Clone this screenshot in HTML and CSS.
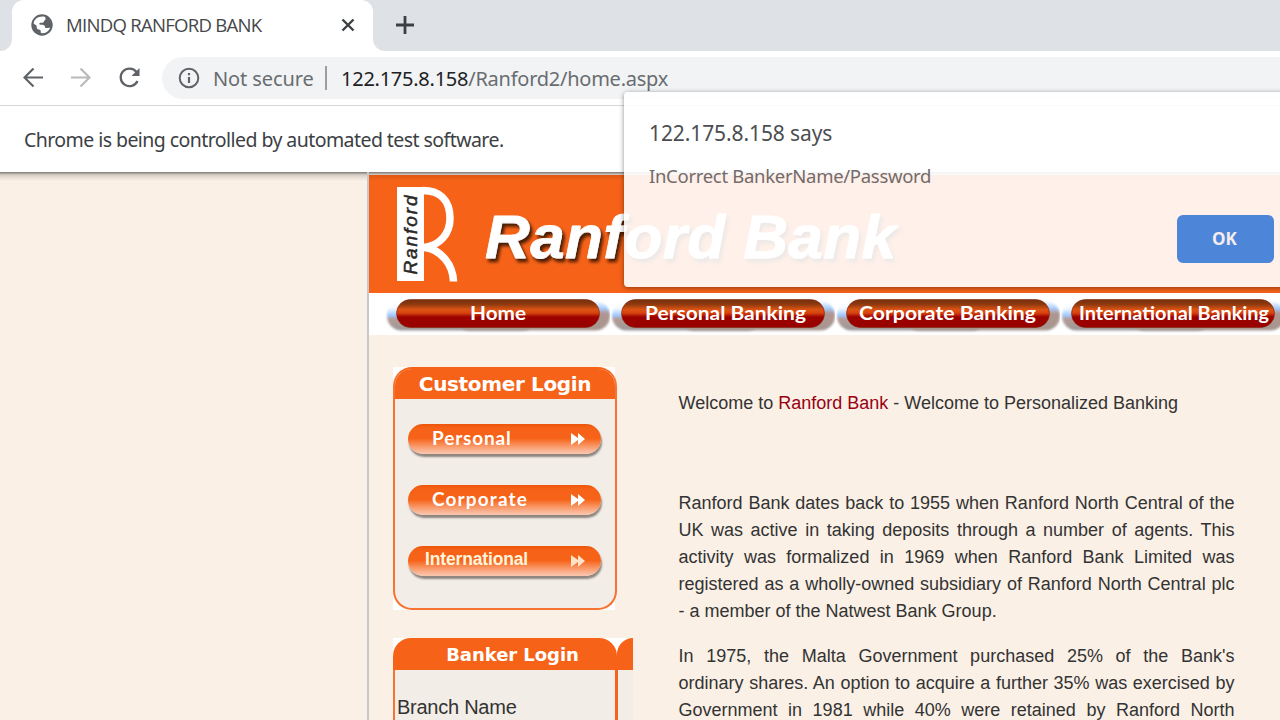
FILE: index.html
```html
<!DOCTYPE html>
<html lang="en">
<head>
<meta charset="utf-8">
<title>MINDQ RANFORD BANK</title>
<link rel="stylesheet" href="styles.css">
</head>
<body>
<div class="window">
  <header class="tabstrip">
    <div class="tab-prev"></div>
    <div class="tab">
      <svg class="globe" width="22" height="22" viewBox="0 0 22 22"><circle cx="11" cy="11" r="10.700" fill="#5f6368"/><path d="M12.500 2.500C14.200 2.800 14.800 3.800 14.600 5c-.2 1.200-1.500 1.300-1.700 2.500-.2 1-1 1.300-2.400 1.300-1.800 0-2.300.4-2.200 1.300.2.900 1.700.6 3.200.7 1.600.1 2.300.9 2.500 2.200.1.900.8 1 2 .9l3.200-.2c-1 3-3.800 5.300-7.200 5.600l-2.200-.2v-1.700c0-1.300-.9-1.900-2.100-2-1.300-.1-2-.9-2-2.200v-1.400L2.600 9.500C3 5.500 6.700 2 12.500 2.500z" fill="#fff"/></svg>
      <span class="tab-title">MINDQ RANFORD BANK</span>
      <svg class="tab-close" width="14" height="14" viewBox="0 0 14 14"><path d="M1.500 1.500l11 11M12.500 1.500l-11 11" stroke="#3c4043" stroke-width="2.400"/></svg>
    </div>
    <div class="tab-rest"><svg width="18" height="18" viewBox="0 0 18 18"><path d="M9 0v18M0 9h18" stroke="#3c4043" stroke-width="2.800"/></svg></div>
  </header>
  <div class="toolbar">
    <svg width="20" height="20" viewBox="0 0 20 20" fill="none" stroke="#5f6368" stroke-width="2.200"><path d="M20 9.500H2M10.500 .5L1.500 9.500l9 9"/></svg>
    <svg width="20" height="20" viewBox="0 0 20 20" fill="none" stroke="#bababa" stroke-width="2.200"><path d="M0 9.500h18M9.500 .5l9 9-9 9"/></svg>
    <svg width="22" height="22" viewBox="0 0 22 22"><path d="M17.500 5A8.800 8.800 0 1 0 18.500 14" fill="none" stroke="#5f6368" stroke-width="2.300"/><path d="M20.500 1v8h-8z" fill="#5f6368"/></svg>
    <div class="omnibox">
      <svg width="22" height="22" viewBox="0 0 22 22"><circle cx="11" cy="11" r="9.300" fill="none" stroke="#5f6368" stroke-width="2"/><path d="M11 10v6M11 6v2.200" stroke="#5f6368" stroke-width="2.200"/></svg>
      <span class="secure">Not secure</span><span class="divider"></span><span class="url"><b>122.175.8.158</b>/Ranford2/home.aspx</span>
    </div>
  </div>
  <div class="infobar"><span>Chrome is being controlled by automated test software.</span></div>
  <main class="viewport">
    <div class="page">
      <svg class="banner" width="911" height="118" viewBox="0 0 911 118">
        <defs><filter id="shade" x="-10%" y="-20%" width="120%" height="150%"><feDropShadow dx="2.500" dy="3.500" stdDeviation="1.800" flood-color="#2b1005" flood-opacity=".85"/></filter></defs>
        <path d="M28 12h27v94H28z" fill="#fff"/>
        <path d="M54 15.500c15 0 27 8 27 28 0 15-10 27-26 29 18 2 29 18 29.500 34" fill="none" stroke="#fff" stroke-width="7.500"/>
        <text class="logo-side" transform="translate(48 99.500) rotate(-90)" textLength="79">Ranford</text>
        <text class="logo-name" x="116" y="83" textLength="411" filter="url(#shade)">Ranford Bank</text>
      </svg>
      <nav class="nav">
        <svg width="225" height="42" viewBox="0 0 225 42">
          <defs>
            <linearGradient id="glow" x2="0" y2="1"><stop offset="0" stop-color="#fff"/><stop offset=".25" stop-color="#f4f9ff"/><stop offset=".5" stop-color="#98c5ff"/><stop offset=".6" stop-color="#b79c96"/><stop offset="1" stop-color="#999"/></linearGradient>
            <linearGradient id="glowr" x2="0" y2="1"><stop offset="0" stop-color="#fff"/><stop offset=".25" stop-color="#a5ccff"/><stop offset=".42" stop-color="#b09590"/><stop offset="1" stop-color="#a69791"/></linearGradient>
            <linearGradient id="pill" x2="0" y2="1"><stop offset="0" stop-color="#75300c"/><stop offset=".16" stop-color="#8a380e"/><stop offset=".36" stop-color="#dc5314"/><stop offset=".48" stop-color="#d8440e"/><stop offset=".62" stop-color="#9c0300"/><stop offset="1" stop-color="#980000"/></linearGradient>
            <filter id="soft" x="-5%" y="-20%" width="110%" height="140%"><feGaussianBlur stdDeviation="1"/></filter>
            <g id="navpill"><rect x="2" y="8" width="150" height="29.500" rx="14.500" fill="url(#glow)" filter="url(#soft)"/><rect x="70" y="8" width="155" height="29.500" rx="14.500" fill="url(#glowr)" filter="url(#soft)"/><rect x="11.500" y="6.500" width="203" height="28" rx="14" fill="url(#pill)" stroke="#85210a" stroke-opacity=".6"/></g>
          </defs>
          <use href="#navpill"/><text class="nav-label" x="85" y="27" textLength="56" lengthAdjust="spacingAndGlyphs">Home</text></svg>
        <svg width="225" height="42" viewBox="0 0 225 42"><use href="#navpill"/><text class="nav-label" x="35" y="27" textLength="161" lengthAdjust="spacingAndGlyphs">Personal Banking</text></svg>
        <svg width="225" height="42" viewBox="0 0 225 42"><use href="#navpill"/><text class="nav-label" x="24" y="27" textLength="177" lengthAdjust="spacingAndGlyphs">Corporate Banking</text></svg>
        <svg width="225" height="42" viewBox="0 0 225 42"><use href="#navpill"/><text class="nav-label" x="19" y="27" textLength="190" lengthAdjust="spacingAndGlyphs">International Banking</text></svg>
      </nav>
      <div class="columns">
        <aside class="side">
          <section class="corner-box">
            <div class="panel">
              <h2 class="panel-head">Customer Login</h2>
              <div class="panel-body">
                <a class="pill">Personal<svg width="14" height="12" viewBox="0 0 14 12"><path d="M0 0l7 5V0l7 6-7 6V7l-7 5z" fill="#fff"/></svg></a>
                <a class="pill pill-corp">Corporate<svg width="14" height="12" viewBox="0 0 14 12"><path d="M0 0l7 5V0l7 6-7 6V7l-7 5z" fill="#fff"/></svg></a>
                <a class="pill pill-intl">International<svg width="14" height="12" viewBox="0 0 14 12"><path d="M0 0l7 5V0l7 6-7 6V7l-7 5z" fill="#ffe3c8"/></svg></a>
              </div>
            </div>
          </section>
          <section class="banker">
            <div class="banker-top"><h2 class="banker-head">Banker Login</h2><div class="banker-next"></div></div>
            <div class="banker-body"><div class="banker-cell">Branch Name</div><div class="banker-edge"></div></div>
          </section>
        </aside>
        <article class="copy">
          <p class="welcome">Welcome to <em>Ranford Bank</em> - Welcome to Personalized Banking</p>
          <p>Ranford Bank dates back to 1955 when Ranford North Central of the UK was active in taking deposits through a number of agents. This activity was formalized in 1969 when Ranford Bank Limited was registered as a wholly-owned subsidiary of Ranford North Central plc - a member of the Natwest Bank Group.</p>
          <p class="cut">In 1975, the Malta Government purchased 25% of the Bank's ordinary shares. An option to acquire a further 35% was exercised by Government in 1981 while 40% were retained by Ranford North</p>
        </article>
      </div>
    </div>
  </main>
  <div class="dialog">
    <div class="dialog-title">122.175.8.158 says</div>
    <div class="dialog-text">InCorrect BankerName/Password</div>
    <button class="ok">OK</button>
  </div>
</div>
</body>
</html>
```
FILE: styles.css
```css
* { box-sizing: border-box; }
body { margin: 0; }
.window { position: relative; width: 1280px; height: 720px; overflow: hidden; display: flex; flex-direction: column; font-family: "Noto Sans", "Open Sans", sans-serif; background: #fff; color: #3c4043; white-space: nowrap; }
svg { flex: none; display: block; }

.tabstrip { height: 51px; display: flex; flex: none; background: #fff; }
.tab-prev { width: 12px; background: #dee1e6; border-bottom-right-radius: 12px; }
.tab { width: 361px; display: flex; align-items: center; padding: 0 18px 1px 19px; position: relative; }
.tab::before { content: ""; position: absolute; inset: 0 0 20px; background: #dee1e6; }
.tab::after { content: ""; position: absolute; inset: 0; background: #fff; border-radius: 12px 12px 0 0; }
.tab > * { position: relative; z-index: 1; }
.tab-title { margin: -2px 0 0 13px; font-family: "Open Sans", sans-serif; font-size: 18.600px; font-weight: 400; letter-spacing: -0.75px; color: #45474a; }
.tab-close { margin-left: auto; }
.tab-rest { flex: 1; background: #dee1e6; border-bottom-left-radius: 12px; padding: 16px 0 0 23px; }

.toolbar { height: 55px; flex: none; display: flex; align-items: center; padding: 0 0 0 23px; border-bottom: 1px solid #d5d7da; }
.toolbar > svg + svg { margin-left: 28px; }
.omnibox { flex: 1; height: 42px; margin-left: 21px; display: flex; align-items: center; padding-left: 16px; background: #f1f3f4; border-radius: 21px 0 0 21px; font-size: 20px; color: #696c70; }
.secure { width: 125px; padding-left: 13px; letter-spacing: -0.1px; }
.divider { width: 2px; height: 24px; background: #9b9da0; }
.url { margin-left: 14px; letter-spacing: -0.25px; }
.url b { font-weight: 400; color: #202124; }

.infobar { height: 66px; flex: none; padding: 20px 24px; font-size: 19.500px; line-height: 27px; letter-spacing: -0.56px; }

.viewport { flex: 1; min-height: 0; background: linear-gradient(#8c8782 0, #8c8782 1px, #c9c1b8 2px, #e6dcd3 5px, #faf0e6 9px); padding-left: 367px; font-family: "Liberation Sans", Arial, sans-serif; }
.page { width: 913px; height: 548px; overflow: hidden; border-left: 2px solid #c8c8c8; }
.banner { margin-top: 3px; background: linear-gradient(#df5813, #f66318 6px); }
.logo-side { font: italic 19px "Liberation Sans", sans-serif; fill: #2a2927; stroke: #2a2927; stroke-width: .5px; }
.logo-name { font: bold italic 62px "Liberation Sans", sans-serif; fill: #fff; stroke: #fff; stroke-width: .8px; stroke-linejoin: round; }
.nav { height: 42px; display: flex; padding-left: 16px; background: #fff; }
.nav-label { font: bold 19.500px Lato, sans-serif; fill: #fff; }

.columns { display: flex; padding-left: 24px; color: #333; }
.side { width: 240px; flex: none; padding-top: 32px; }
h2 { margin: 0; color: #fff; font-family: "DejaVu Sans", Verdana, sans-serif; font-weight: bold; text-align: center; }
.corner-box { width: 224px; height: 243px; background: linear-gradient(90deg, #fff 222px, #faf0e6 222px); }
.panel { height: 243px; border: 2px solid #f77331; border-top-color: #f66318; border-radius: 19px; overflow: hidden; background: #f2ede7; }
.panel-head { height: 30px; background: #f66318; font-size: 20px; line-height: 31px; letter-spacing: -0.35px; }
.panel-body { display: flex; flex-direction: column; gap: 31px; padding: 25px 14px 0 13px; }
.pill { height: 30px; width: 193px; border-radius: 15px; display: flex; align-items: center; justify-content: space-between; padding: 0 16px 3px 24px; background: linear-gradient(#ed560a, #f66318 15%, #f66318 48%, #fa9a6b 75%, #f9c2a9 96%); box-shadow: 1px 3px 2px #8e857f; color: #fff; font: bold 19px/26px Lato, sans-serif; letter-spacing: .85px; }
.pill-corp { letter-spacing: 1.150px; }
.pill-intl { padding-left: 17px; font: bold 17.500px/27px "Liberation Sans", sans-serif; letter-spacing: -.15px; color: #fff5dc; }
.pill svg { margin-top: 2px; }

.banker { margin-top: 28px; }
.banker-top { display: flex; height: 32px; background: #fff; }
.banker-head { width: 224px; background: #f66318; border-radius: 18px 18px 0 0; font-size: 18px; line-height: 33px; padding-left: 15px; letter-spacing: -.05px; }
.banker-next { flex: 1; background: #f66318; border-top-left-radius: 16px; }
.banker-body { display: flex; height: 60px; background: #f2ede7; border-left: 2px solid #f77331; font-size: 20px; }
.banker-cell { width: 220px; padding: 25px 0 0 2px; line-height: 24px; letter-spacing: -.25px; }
.banker-edge { width: 3px; background: #f66318; }

.copy { width: 556px; margin: 55px 0 0 45.500px; font-size: 18px; line-height: 27px; white-space: normal; text-align: justify; }
.copy p { margin: 0 0 18px; }
.copy .welcome { margin-bottom: 73px; }
.copy .cut { text-align-last: justify; }
.copy em { font-style: normal; color: #990012; }

.dialog { position: absolute; left: 624px; top: 92px; width: 670px; height: 195px; border-radius: 4px; background: rgba(255,255,255,.905); box-shadow: 0 1px 5px rgba(0,0,0,.45); padding: 26px 25px; }
.dialog-title { font-size: 21px; line-height: 30px; letter-spacing: -.1px; color: #4c4d50; }
.dialog-text { margin-top: 15px; font-size: 18.500px; line-height: 26px; letter-spacing: -.3px; color: #746a69; }
.ok { display: block; width: 97px; height: 48px; margin: 26px 0 0 528px; border: 0; border-radius: 6px; padding: 0 2px 1px 0; background: #4d86d9; color: #f5ecee; font: bold 17px "Open Sans", sans-serif; }
```
